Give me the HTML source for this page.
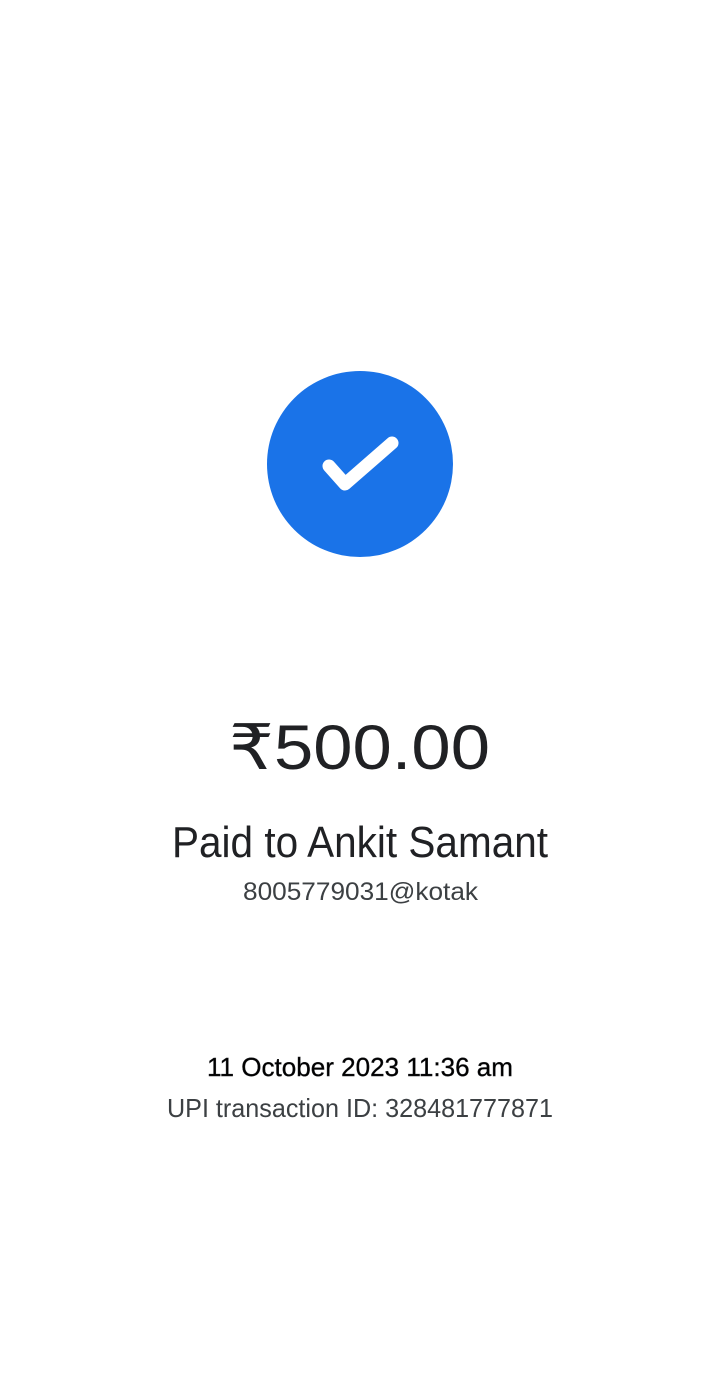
<!DOCTYPE html>
<html><head><meta charset="utf-8"><style>
html,body{margin:0;padding:0;background:#fff;width:720px;height:1391px;overflow:hidden}
svg{display:block}
text{font-family:"Liberation Sans",sans-serif}
</style></head><body>
<svg width="720" height="1391" viewBox="0 0 720 1391">
<circle cx="360" cy="464" r="93" fill="#1a73e8"/>
<path d="M329 466 L345 484 L392 443" fill="none" stroke="#fff" stroke-width="13" stroke-linecap="round" stroke-linejoin="round"/>
<text x="229" y="769" font-size="63" fill="#202124" textLength="261" lengthAdjust="spacingAndGlyphs">₹500.00</text>
<text x="172" y="857" font-size="44" fill="#202124" textLength="376" lengthAdjust="spacingAndGlyphs">Paid to Ankit Samant</text>
<text x="243" y="900" font-size="25" fill="#3c4043" textLength="235" lengthAdjust="spacingAndGlyphs">8005779031@kotak</text>
<text x="207" y="1076" font-size="26" fill="#000" stroke="#202124" stroke-width="0.4" textLength="306" lengthAdjust="spacingAndGlyphs">11 October 2023 11:36 am</text>
<text x="167" y="1117" font-size="26" fill="#3c4043" textLength="386" lengthAdjust="spacingAndGlyphs">UPI transaction ID: 328481777871</text>
</svg>
</body></html>
